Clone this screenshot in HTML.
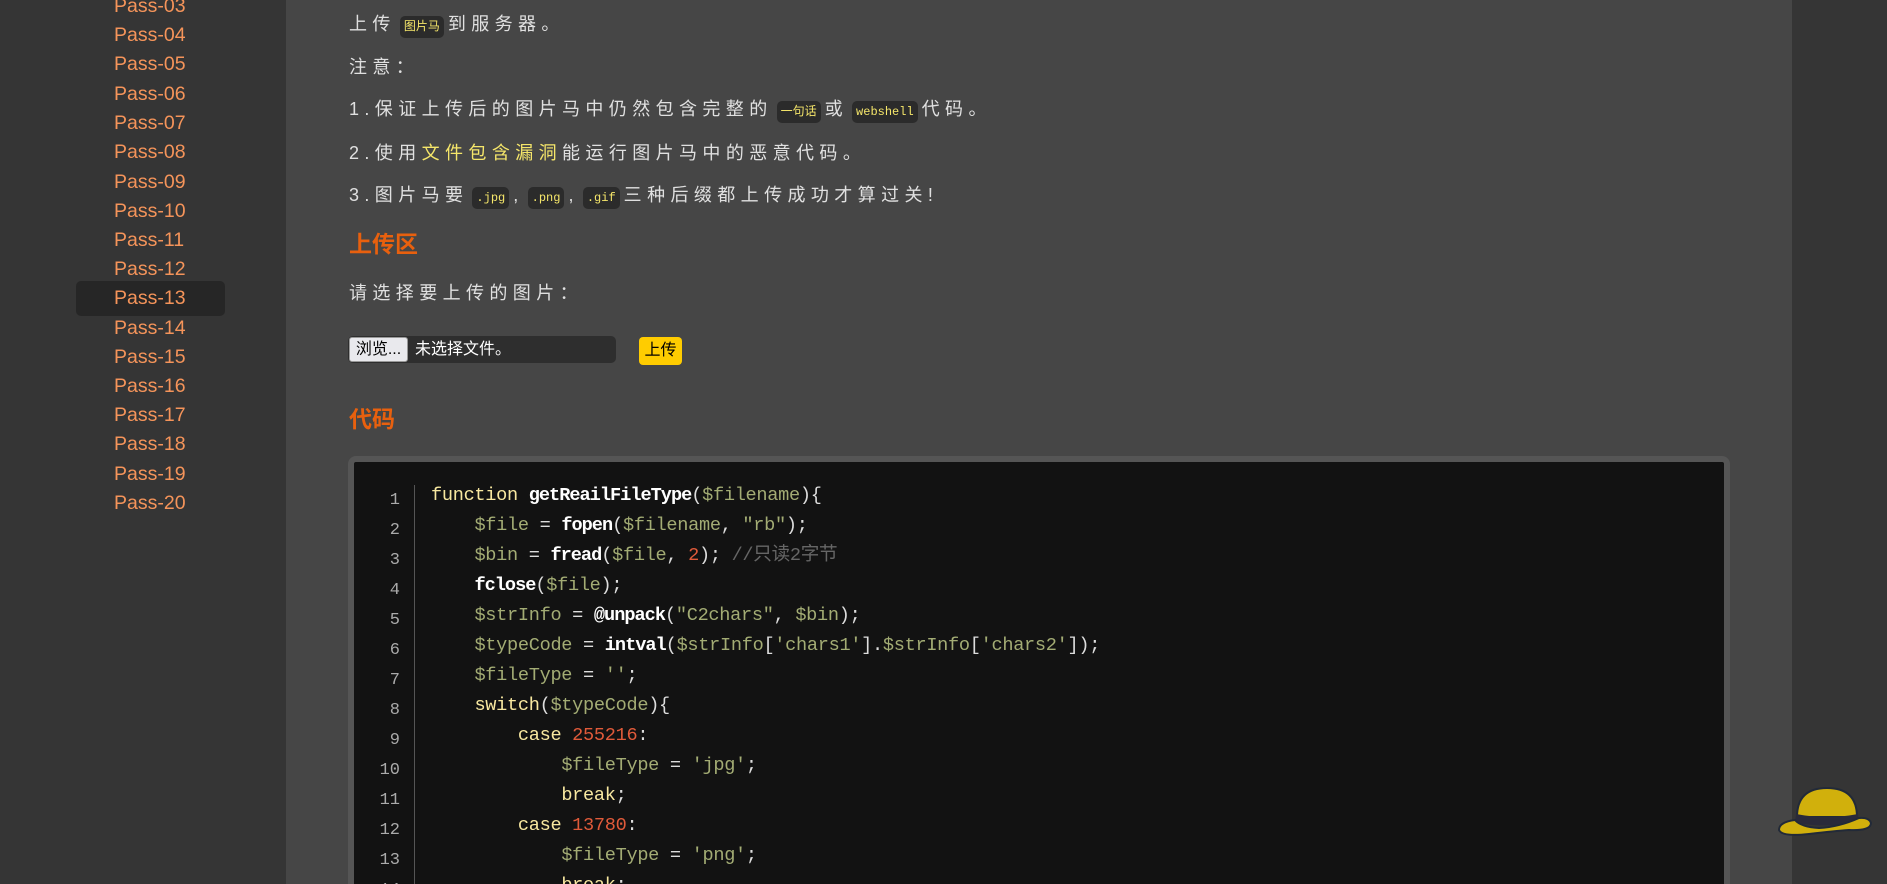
<!DOCTYPE html>
<html><head><meta charset="utf-8"><style>
*{margin:0;padding:0;box-sizing:border-box}
html,body{width:1887px;height:884px;overflow:hidden}
body{background:#353535;font-family:"Liberation Sans","Noto Sans CJK SC",sans-serif;position:relative}
#side{position:absolute;left:0;top:0;width:286px;height:884px;background:#353535}
#side a{position:absolute;left:114px;color:#f5945a;font-size:19.5px;text-decoration:none;line-height:24px}
#act{position:absolute;left:76px;top:281px;width:149px;height:35px;background:#262626;border-radius:5px}
#main{position:absolute;left:286px;top:0;width:1506px;height:884px;background:#464646}
.t{position:absolute;left:349px;color:#e0e0e0;font-size:18px;letter-spacing:5.4px;line-height:24px;white-space:nowrap}
.c{background:#2b2b2b;color:#f5e66a;font-family:"Liberation Mono","Noto Sans CJK SC",monospace;font-size:12px;letter-spacing:0;padding:4px 4px;border-radius:5px;margin:0 4px}
.y{color:#f5e66a}
h2{position:absolute;left:349px;color:#e8600e;font-size:23px;font-weight:bold;line-height:28px}
#code{position:absolute;left:348px;top:456px;width:1382px;height:440px;background:#121212;border:6px solid #555;border-radius:8px}
#sep{position:absolute;left:414px;top:485px;width:1px;height:400px;background:#555}
.ln{position:absolute;width:50px;left:350px;text-align:right;color:#aaa;font-family:"Liberation Mono",monospace;font-size:17px;line-height:24px}
.cl{position:absolute;left:431px;font-family:"Liberation Mono","Noto Sans CJK SC",monospace;font-size:18.6px;line-height:24px;height:24px;color:#ddd;white-space:pre;letter-spacing:-0.3px}
.k{color:#f8e8a0}.f{color:#fff;font-weight:bold;letter-spacing:-1px}.v{color:#a3ac74}.s{color:#a3ac74}.n{color:#e05a3a}.m{color:#666}
</style></head><body>
<div id="side">
<div id="act"></div>
<a style="top:-6px">Pass-03</a><a style="top:23px">Pass-04</a><a style="top:52px">Pass-05</a><a style="top:82px">Pass-06</a><a style="top:111px">Pass-07</a><a style="top:140px">Pass-08</a><a style="top:170px">Pass-09</a><a style="top:199px">Pass-10</a><a style="top:228px">Pass-11</a><a style="top:257px">Pass-12</a><a style="top:286px">Pass-13</a><a style="top:316px">Pass-14</a><a style="top:345px">Pass-15</a><a style="top:374px">Pass-16</a><a style="top:403px">Pass-17</a><a style="top:432px">Pass-18</a><a style="top:462px">Pass-19</a><a style="top:491px">Pass-20</a>
</div>
<div id="main"></div>
<div class="t" style="top:12px">上传<span class="c">图片马</span>到服务器。</div>
<div class="t" style="top:55px">注意：</div>
<div class="t" style="top:97px">1.保证上传后的图片马中仍然包含完整的<span class="c">一句话</span>或<span class="c">webshell</span>代码。</div>
<div class="t" style="top:141px">2.使用<span class="y">文件包含漏洞</span>能运行图片马中的恶意代码。</div>
<div class="t" style="top:183px">3.图片马要<span class="c">.jpg</span>,<span class="c">.png</span>,<span class="c">.gif</span>三种后缀都上传成功才算过关!</div>
<h2 style="top:230px">上传区</h2>
<div class="t" style="top:281px">请选择要上传的图片：</div>
<div style="position:absolute;left:348px;top:336px;width:268px;height:27px;background:#2e2e2e;border-radius:5px"></div>
<div style="position:absolute;left:349px;top:337px;width:59px;height:25px;background:#e9e9ed;border:1px solid #999;border-radius:3px;font-size:16px;line-height:23px;text-align:center;color:#000">浏览...</div>
<div style="position:absolute;left:415px;top:337px;font-size:16px;line-height:25px;color:#fff">未选择文件。</div>
<div style="position:absolute;left:639px;top:337px;width:43px;height:28px;background:#ffcc00;border-radius:4px;font-size:16px;line-height:28px;text-align:center;color:#000">上传</div>
<h2 style="top:405px">代码</h2>
<div id="code"></div>
<div id="sep"></div>
<div class="ln" style="top:489px">1</div><div class="ln" style="top:519px">2</div><div class="ln" style="top:549px">3</div><div class="ln" style="top:579px">4</div><div class="ln" style="top:609px">5</div><div class="ln" style="top:639px">6</div><div class="ln" style="top:669px">7</div><div class="ln" style="top:699px">8</div><div class="ln" style="top:729px">9</div><div class="ln" style="top:759px">10</div><div class="ln" style="top:789px">11</div><div class="ln" style="top:819px">12</div><div class="ln" style="top:849px">13</div><div class="ln" style="top:879px">14</div>
<div class="cl" style="top:484px"><span class="k">function</span> <span class="f">getReailFileType</span>(<span class="v">$filename</span>){</div>
<div class="cl" style="top:514px">    <span class="v">$file</span> = <span class="f">fopen</span>(<span class="v">$filename</span>, <span class="s">"rb"</span>);</div>
<div class="cl" style="top:544px">    <span class="v">$bin</span> = <span class="f">fread</span>(<span class="v">$file</span>, <span class="n">2</span>); <span class="m">//只读2字节</span></div>
<div class="cl" style="top:574px">    <span class="f">fclose</span>(<span class="v">$file</span>);</div>
<div class="cl" style="top:604px">    <span class="v">$strInfo</span> = <span class="f">@unpack</span>(<span class="s">"C2chars"</span>, <span class="v">$bin</span>);</div>
<div class="cl" style="top:634px">    <span class="v">$typeCode</span> = <span class="f">intval</span>(<span class="v">$strInfo</span>[<span class="s">'chars1'</span>].<span class="v">$strInfo</span>[<span class="s">'chars2'</span>]);</div>
<div class="cl" style="top:664px">    <span class="v">$fileType</span> = <span class="s">''</span>;</div>
<div class="cl" style="top:694px">    <span class="k">switch</span>(<span class="v">$typeCode</span>){</div>
<div class="cl" style="top:724px">        <span class="k">case</span> <span class="n">255216</span>:</div>
<div class="cl" style="top:754px">            <span class="v">$fileType</span> = <span class="s">'jpg'</span>;</div>
<div class="cl" style="top:784px">            <span class="k">break</span>;</div>
<div class="cl" style="top:814px">        <span class="k">case</span> <span class="n">13780</span>:</div>
<div class="cl" style="top:844px">            <span class="v">$fileType</span> = <span class="s">'png'</span>;</div>
<div class="cl" style="top:874px">            <span class="k">break</span>;</div>
<svg style="position:absolute;left:1777px;top:786px" width="96" height="52" viewBox="0 0 96 52">
<path d="M20 31 Q20 2 50 2 Q80 2 80 31 Z" fill="#d1b00c" stroke="#222a38" stroke-width="2"/>
<path d="M19 28 Q50 34 81 28 L82 37 Q50 42 18 37 Z" fill="#2a2a3a"/>
<path d="M18 34 Q2 36 2 44 Q5 51 32 48 Q58 45 72 44 Q94 45 94 37 Q92 31 82 32 Q62 41 42 42 Q24 41 18 34 Z" fill="#d1b00c" stroke="#222a38" stroke-width="2"/>
</svg>
</body></html>
